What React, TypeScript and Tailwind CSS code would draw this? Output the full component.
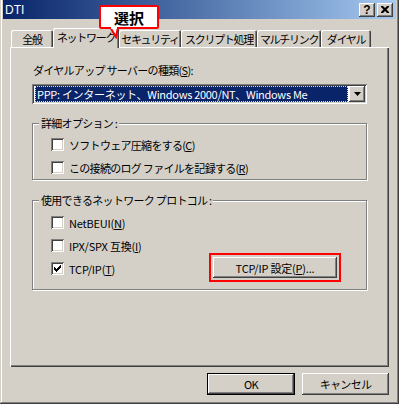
import { ReactNode } from "react";

const raised = "shadow-[inset_-1px_-1px_#404040,inset_1px_1px_#ffffff,inset_-2px_-2px_#808080]";
const sunken = "shadow-[inset_1px_1px_#808080,inset_-1px_-1px_#ffffff,inset_2px_2px_#404040,inset_-2px_-2px_#d4d0c8]";

function Check({ checked = false }: { checked?: boolean }) {
  return (
    <span className={`w-[13px] h-[13px] shrink-0 bg-white flex items-center justify-center ${sunken}`}>
      {checked && (
        <svg width="7" height="7" viewBox="0 0 7 7">
          <path d="M0 2h1v1h1v1h1v-1h1v-1h1v-1h1v-1h1v3h-1v1h-1v1h-1v1h-1v1h-1v-1h-1v-1h-1z" fill="#000" />
        </svg>
      )}
    </span>
  );
}

function CheckRow({ label, checked }: { label: ReactNode; checked?: boolean }) {
  return (
    <div className="flex items-center h-[13px] gap-[5px]">
      <Check checked={checked} />
      <span className="leading-[14px] whitespace-nowrap">{label}</span>
    </div>
  );
}

function Group({ title, className, children }: { title: string; className: string; children: ReactNode }) {
  return (
    <div className={`relative border border-[#808080] shadow-[inset_1px_1px_#ffffff,1px_1px_#ffffff] ${className}`}>
      <span className="absolute -top-[8px] left-[6px] px-[2px] bg-[#d4d0c8] leading-[14px] whitespace-nowrap">
        {title}
      </span>
      {children}
    </div>
  );
}

const tabs = [
  { label: "全般", w: "w-[42px]" },
  { label: "ネットワーク", w: "w-[66px]", active: true },
  { label: "セキュリティ", w: "w-[62px]" },
  { label: "スクリプト処理", w: "w-[76px]" },
  { label: "マルチリンク", w: "w-[64px]" },
  { label: "ダイヤル", w: "w-[50px]" },
];

const tabEdge = "shadow-[inset_1px_1px_#ffffff,inset_-1px_0_#404040,inset_-2px_0_#808080]";

export default function App() {
  return (
    <div
      className="relative w-[399px] h-[404px] bg-[#d4d0c8] px-[3px] flex flex-col text-[11px] tracking-[-0.7px] text-black shadow-[inset_-1px_-1px_#404040,inset_1px_0_#d4d0c8,inset_-2px_-2px_#808080,inset_2px_0_#ffffff]"
      style={{ fontFamily: '"Noto Sans CJK JP", "Liberation Sans", sans-serif' }}
    >
      {/* title bar */}
      <div className="h-[19px] flex items-center pl-[2px] pr-[3px] bg-linear-to-r from-[#0a246a] to-[#a6caf0]">
        <span className="text-white text-[12px] tracking-normal leading-none" style={{ fontFamily: '"Liberation Sans", sans-serif' }}>
          DTI
        </span>
        <div className="ml-auto flex gap-[2px]">
          <span
            className={`w-[16px] h-[14px] bg-[#d4d0c8] flex items-center justify-center font-bold text-[12px] tracking-normal leading-none ${raised}`}
            style={{ fontFamily: '"Liberation Sans", sans-serif' }}
          >
            ?
          </span>
          <span className={`w-[16px] h-[14px] bg-[#d4d0c8] flex items-center justify-center ${raised}`}>
            <svg width="8" height="7" viewBox="0 0 8 7">
              <path d="M0 0h2l2 2 2-2h2v1l-2.5 2.5L8 6v1H6L4 5 2 7H0V6l2.5-2.5L0 1z" fill="#000" />
            </svg>
          </span>
        </div>
      </div>

      <div className="mx-[7px] flex flex-col">
        {/* tabs */}
        <div className="mt-[9px] h-[19px] flex items-end pl-[1px]">
          {tabs.map((t) =>
            t.active ? (
              <div
                key={t.label}
                className={`${t.w} relative z-10 -mb-[1px] h-[20px] bg-[#d4d0c8] rounded-t-[2px] flex justify-center pt-[2px] leading-[14px] tracking-[-1.3px] whitespace-nowrap overflow-hidden ${tabEdge}`}
              >
                {t.label}
              </div>
            ) : (
              <div
                key={t.label}
                className={`${t.w} h-[17px] bg-[#d4d0c8] rounded-t-[2px] flex justify-center pt-[2px] leading-[14px] tracking-[-1.3px] whitespace-nowrap overflow-hidden ${tabEdge}`}
              >
                {t.label}
              </div>
            ),
          )}
        </div>

        {/* panel */}
        <div className="h-[320px] pt-[16px] px-[22px] flex flex-col shadow-[inset_1px_1px_#ffffff,inset_-1px_-1px_#404040,inset_-2px_-2px_#808080]">
          <div className="h-[14px] leading-[14px] pl-[1px]">
            ダイヤルアップ サーバーの種類(<u>S</u>):
          </div>

          <div className={`mt-[7px] h-[20px] bg-white flex items-center p-[2px] ${sunken}`}>
            <div className="flex-1 h-[16px] ml-[1px] bg-[#0a246a] text-white border border-dotted border-[#e8e4a0] flex items-center pl-[1px] leading-[14px] tracking-[-0.3px] whitespace-nowrap">
              PPP: インターネット、Windows 2000/NT、Windows Me
            </div>
            <span className={`w-[16px] h-[16px] ml-[1px] bg-[#d4d0c8] flex items-center justify-center ${raised}`}>
              <svg width="7" height="4" viewBox="0 0 7 4">
                <path d="M0 0h7L3.5 4z" fill="#000" />
              </svg>
            </span>
          </div>

          <Group title="詳細オプション :" className="mt-[19px] h-[57px] pt-[14px] pl-[18px] flex flex-col gap-[10px]">
            <CheckRow label={<>ソフトウェア圧縮をする(<u>C</u>)</>} />
            <CheckRow label={<>この接続のログ ファイルを記録する(<u>R</u>)</>} />
          </Group>

          <Group title="使用できるネットワーク プロトコル :" className="mt-[20px] h-[90px] pt-[15px] pl-[18px] pr-[29px] flex flex-col">
            <CheckRow label={<span className="tracking-[-0.2px]">NetBEUI(<u>N</u>)</span>} />
            <div className="mt-[10px]">
              <CheckRow label={<span className="tracking-[-0.2px]">IPX/SPX 互換(<u>I</u>)</span>} />
            </div>
            <div className="mt-[7px] flex items-center">
              <CheckRow checked label={<span className="tracking-[-0.2px]">TCP/IP(<u>T</u>)</span>} />
              <button
                className={`ml-auto w-[124px] h-[21px] -mt-[2px] bg-[#d4d0c8] leading-[14px] tracking-[-0.2px] outline-2 outline-[#ff0000] outline-offset-[2px] ${raised}`}
              >
                TCP/IP 設定(<u>P</u>)...
              </button>
            </div>
          </Group>
        </div>

        {/* footer */}
        <div className="mt-[6px] flex justify-end gap-[7px]">
          <button className="w-[88px] h-[22px] bg-[#d4d0c8] border border-black leading-[14px] shadow-[inset_-1px_-1px_#404040,inset_1px_1px_#ffffff,inset_-2px_-2px_#808080]">
            OK
          </button>
          <button className={`w-[87px] h-[22px] bg-[#d4d0c8] leading-[14px] ${raised}`}>キャンセル</button>
        </div>
      </div>

      {/* callout annotation */}
      <div className="absolute left-[99px] top-[5px] w-[60px] h-[24px] bg-white border-2 border-[#ff0000] rounded-[2px] flex items-center justify-center font-bold text-[15px] tracking-normal leading-none z-20">
        選択
      </div>
      <svg className="absolute left-[109px] top-[27px] z-30" width="12" height="12" viewBox="0 0 12 12">
        <path d="M1 0 L7 10 L9 0" fill="#ffffff" stroke="#ff0000" strokeWidth="2" />
        <rect x="2" y="0" width="6" height="2" fill="#ffffff" />
      </svg>
    </div>
  );
}
